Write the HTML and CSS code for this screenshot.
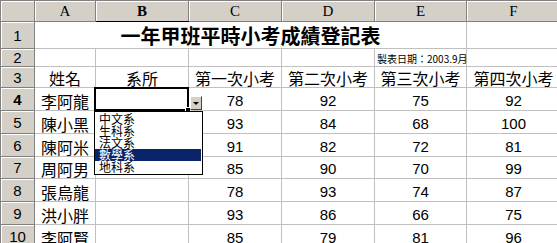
FILE: index.html
```html
<!DOCTYPE html>
<html>
  <head>
    <title>一年甲班平時小考成績登記表</title>
    <link rel="stylesheet" href="styles.css">
  </head>
  <body>
    <div class="sheet">
      <table class="grid">
        <colgroup>
          <col class="c-head">
          <col class="c-a">
          <col class="c-b">
          <col class="c-c">
          <col class="c-d">
          <col class="c-e">
          <col class="c-f">
        </colgroup>
        <tr class="r-head">
          <th class="corner"></th>
          <th class="col-head">A</th>
          <th class="col-head col-active">B</th>
          <th class="col-head">C</th>
          <th class="col-head">D</th>
          <th class="col-head">E</th>
          <th class="col-head">F</th>
        </tr>
        <tr class="r-title">
          <th class="row-head">1</th>
          <td class="title" colspan="5">一年甲班平時小考成績登記表</td>
          <td></td>
        </tr>
        <tr class="r-date">
          <th class="row-head">2</th>
          <td></td>
          <td></td>
          <td></td>
          <td></td>
          <td class="date">製表日期：2003.9月</td>
          <td></td>
        </tr>
        <tr class="r-label">
          <th class="row-head">3</th>
          <td>姓名</td>
          <td>系所</td>
          <td>第一次小考</td>
          <td>第二次小考</td>
          <td>第三次小考</td>
          <td>第四次小考</td>
        </tr>
        <tr class="r-data">
          <th class="row-head row-active">4</th>
          <td>李阿龍</td>
          <td class="active">
            <div class="active-box"><span class="fill-handle"></span></div>
            <div class="dd-btn"><span class="dd-arrow"></span></div>
            <ul class="dd-list">
              <li>中文系</li>
              <li>生科系</li>
              <li>法文系</li>
              <li class="selected">數學系</li>
              <li>地科系</li>
            </ul>
          </td>
          <td class="num">78</td>
          <td class="num">92</td>
          <td class="num">75</td>
          <td class="num">92</td>
        </tr>
        <tr class="r-data">
          <th class="row-head">5</th>
          <td>陳小黑</td>
          <td></td>
          <td class="num">93</td>
          <td class="num">84</td>
          <td class="num">68</td>
          <td class="num">100</td>
        </tr>
        <tr class="r-data">
          <th class="row-head">6</th>
          <td>陳阿米</td>
          <td></td>
          <td class="num">91</td>
          <td class="num">82</td>
          <td class="num">72</td>
          <td class="num">81</td>
        </tr>
        <tr class="r-data r-short">
          <th class="row-head">7</th>
          <td>周阿男</td>
          <td></td>
          <td class="num">85</td>
          <td class="num">90</td>
          <td class="num">70</td>
          <td class="num">99</td>
        </tr>
        <tr class="r-data">
          <th class="row-head">8</th>
          <td>張烏龍</td>
          <td></td>
          <td class="num">78</td>
          <td class="num">93</td>
          <td class="num">74</td>
          <td class="num">87</td>
        </tr>
        <tr class="r-data">
          <th class="row-head">9</th>
          <td>洪小胖</td>
          <td></td>
          <td class="num">93</td>
          <td class="num">86</td>
          <td class="num">66</td>
          <td class="num">75</td>
        </tr>
        <tr class="r-data">
          <th class="row-head">10</th>
          <td>李阿賢</td>
          <td></td>
          <td class="num">85</td>
          <td class="num">79</td>
          <td class="num">81</td>
          <td class="num">96</td>
        </tr>
      </table>
    </div>
  </body>
</html>
```

FILE: styles.css
```css
/* Page */
body {
  margin: 0;
  background-color: #fff;
}

.sheet {
  width: 557px;
  height: 243px;
  overflow: hidden;
}

/* Grid */
.grid {
  border-collapse: collapse;
  table-layout: fixed;
  width: 560px;
  font-family: "Noto Sans CJK TC", sans-serif;
  color: #000;
}

.c-head { width: 34px; }
.c-a { width: 61px; }
.c-b { width: 93px; }
.c-c { width: 93px; }
.c-d { width: 93px; }
.c-e { width: 92px; }
.c-f { width: 94px; }

.grid td {
  border: 1px solid #c0c0c0;
  padding: 0 2px;
  font-size: 16px;
  line-height: 18px;
  text-align: center;
  vertical-align: bottom;
  white-space: nowrap;
  overflow: visible;
}

.grid td.num {
  font-family: "Liberation Sans", sans-serif;
  font-size: 15px;
}

/* Row heights */
.r-head { height: 21px; }
.r-title { height: 27px; }
.r-date { height: 18px; }
.r-label { height: 21px; }
.r-data { height: 23px; }
.r-data.r-short { height: 22px; }

/* Headers */
.grid th {
  background-color: #d4d0c8;
  border: 1px solid #808080;
  box-shadow: inset 1px 1px 0 #fff;
  font-weight: normal;
  padding: 0;
  text-align: center;
}

.col-head {
  font-family: "Liberation Serif", serif;
  font-size: 15px;
}

.col-active {
  font-weight: bold !important;
  border-bottom: 1px solid #000 !important;
}

.row-head {
  font-family: "Liberation Sans", sans-serif;
  font-size: 15px;
}

.row-active {
  font-weight: bold !important;
}

/* Title and date */
.grid td.title {
  font-size: 20px;
  font-weight: bold;
  line-height: 24px;
}

.grid td.date {
  font-size: 10px;
  line-height: 12px;
  text-align: right;
  padding-right: 3px;
  padding-bottom: 1px;
}

/* Active cell with validation dropdown */
.grid td.active {
  position: relative;
  padding: 0;
}

.active-box {
  position: absolute;
  left: -2px;
  top: -1px;
  right: -1px;
  bottom: -1px;
  border: 2px solid #000;
}

.fill-handle {
  position: absolute;
  right: -4px;
  bottom: -4px;
  width: 4px;
  height: 4px;
  background-color: #000;
  border: 1px solid #fff;
}

.dd-btn {
  position: absolute;
  left: 100%;
  margin-left: 2px;
  top: 8px;
  width: 12px;
  height: 14px;
  box-sizing: border-box;
  background-color: #d4d0c8;
  border-top: 1px solid #fff;
  border-left: 1px solid #fff;
  border-right: 1px solid #404040;
  border-bottom: 1px solid #404040;
  display: flex;
  align-items: center;
  justify-content: center;
}

.dd-arrow {
  width: 0;
  height: 0;
  border-left: 3px solid transparent;
  border-right: 3px solid transparent;
  border-top: 3px solid #000;
  margin-top: 1px;
}

.dd-list {
  position: absolute;
  left: -2px;
  top: 100%;
  width: 109px;
  margin: 1px 0 0 0;
  padding: 1px 0;
  list-style: none;
  box-sizing: border-box;
  background-color: #fff;
  border: 1px solid #000;
  text-align: left;
  z-index: 2;
}

.dd-list li {
  font-size: 12px;
  line-height: 12px;
  height: 12px;
  padding-left: 4px;
  margin-right: 1px;
}

.dd-list li.selected {
  background-color: #0a246a;
  color: #fff;
}
```
